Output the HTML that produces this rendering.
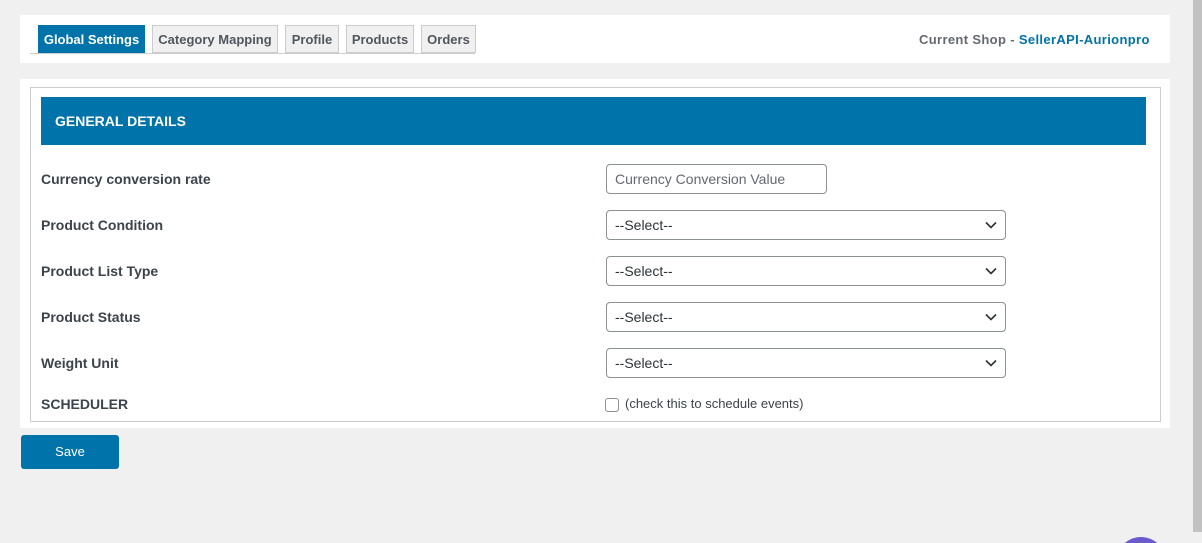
<!DOCTYPE html>
<html style="overflow:hidden;height:543px"><head><style>
body{margin:0;width:1202px;height:543px;background:#f0f0f1;font-family:"Liberation Sans",sans-serif;position:relative;overflow:hidden;color:#3c434a}
.abs{position:absolute}
.panel{background:#fff}
.tab{position:absolute;top:25px;height:28px;box-sizing:border-box;border:1px solid #ccc;background:#f0f0f1;font-size:13px;font-weight:bold;color:#50575e;line-height:27px;text-align:center}
.lbl{position:absolute;left:41px;font-size:14px;font-weight:bold;color:#3c434a}
.sel{position:absolute;left:606px;width:400px;height:30px;box-sizing:border-box;border:1px solid #8c8f94;border-radius:4px;background:#fff;font-size:14px;line-height:28px;padding-left:8px;color:#2c3338}
.sel svg{position:absolute;right:8px;top:10px}
</style></head><body>
<div class="abs panel" style="left:20px;top:15px;width:1150px;height:48px"></div>
<div class="abs" style="left:30px;top:53px;width:445px;height:1px;background:#ccc"></div>
<div class="tab" style="left:38px;width:107px;background:#0073aa;color:#fff;border-color:#0073aa">Global Settings</div>
<div class="tab" style="left:152px;width:126px">Category Mapping</div>
<div class="tab" style="left:285px;width:54px">Profile</div>
<div class="tab" style="left:346px;width:68px">Products</div>
<div class="tab" style="left:421px;width:55px">Orders</div>
<div class="abs" style="left:919px;top:32px;font-size:13px;font-weight:bold;color:#646970;letter-spacing:0.35px;white-space:nowrap">Current Shop - <span style="color:#0073aa">SellerAPI-Aurionpro</span></div>

<div class="abs panel" style="left:20px;top:79px;width:1150px;height:349px"></div>
<div class="abs" style="left:30px;top:87px;width:1131px;height:335px;box-sizing:border-box;border:1px solid #ccc"></div>
<div class="abs" style="left:41px;top:97px;width:1105px;height:48px;background:#0073aa;color:#fff;font-weight:bold;font-size:14px;line-height:48px;box-sizing:border-box;padding-left:14px">GENERAL DETAILS</div>

<div class="lbl" style="top:171px">Currency conversion rate</div>
<div class="abs" style="left:606px;top:164px;width:221px;height:30px;box-sizing:border-box;border:1px solid #8c8f94;border-radius:4px;font-size:14px;line-height:28px;padding-left:8px;color:#646970">Currency Conversion Value</div>

<div class="lbl" style="top:217px">Product Condition</div>
<div class="sel" style="top:210px">--Select--<svg width="12" height="8"><path d="M1 1.5l5 5 5-5" stroke="#2c3338" stroke-width="1.6" fill="none"/></svg></div>
<div class="lbl" style="top:263px">Product List Type</div>
<div class="sel" style="top:256px">--Select--<svg width="12" height="8"><path d="M1 1.5l5 5 5-5" stroke="#2c3338" stroke-width="1.6" fill="none"/></svg></div>
<div class="lbl" style="top:309px">Product Status</div>
<div class="sel" style="top:302px">--Select--<svg width="12" height="8"><path d="M1 1.5l5 5 5-5" stroke="#2c3338" stroke-width="1.6" fill="none"/></svg></div>
<div class="lbl" style="top:355px">Weight Unit</div>
<div class="sel" style="top:348px">--Select--<svg width="12" height="8"><path d="M1 1.5l5 5 5-5" stroke="#2c3338" stroke-width="1.6" fill="none"/></svg></div>
<div class="lbl" style="top:396px">SCHEDULER</div>
<div class="abs" style="left:605px;top:398px;width:14px;height:14px;box-sizing:border-box;border:1px solid #8c8f94;border-radius:3px;background:#fff"></div>
<div class="abs" style="left:625px;top:396px;font-size:13px;color:#3c434a">(check this to schedule events)</div>

<div class="abs" style="left:21px;top:435px;width:98px;height:34px;background:#0073aa;border-radius:3px;color:#fff;font-size:13px;line-height:34px;text-align:center">Save</div>

<div class="abs" style="left:1193px;top:0;width:9px;height:532px;background:#c1c1c1"></div>
<div class="abs" style="left:1110px;top:537px;width:62px;height:6px;overflow:hidden"><div style="margin-left:6px;width:50px;height:50px;border-radius:50%;background:#6a5acd"></div></div>
</body></html>
